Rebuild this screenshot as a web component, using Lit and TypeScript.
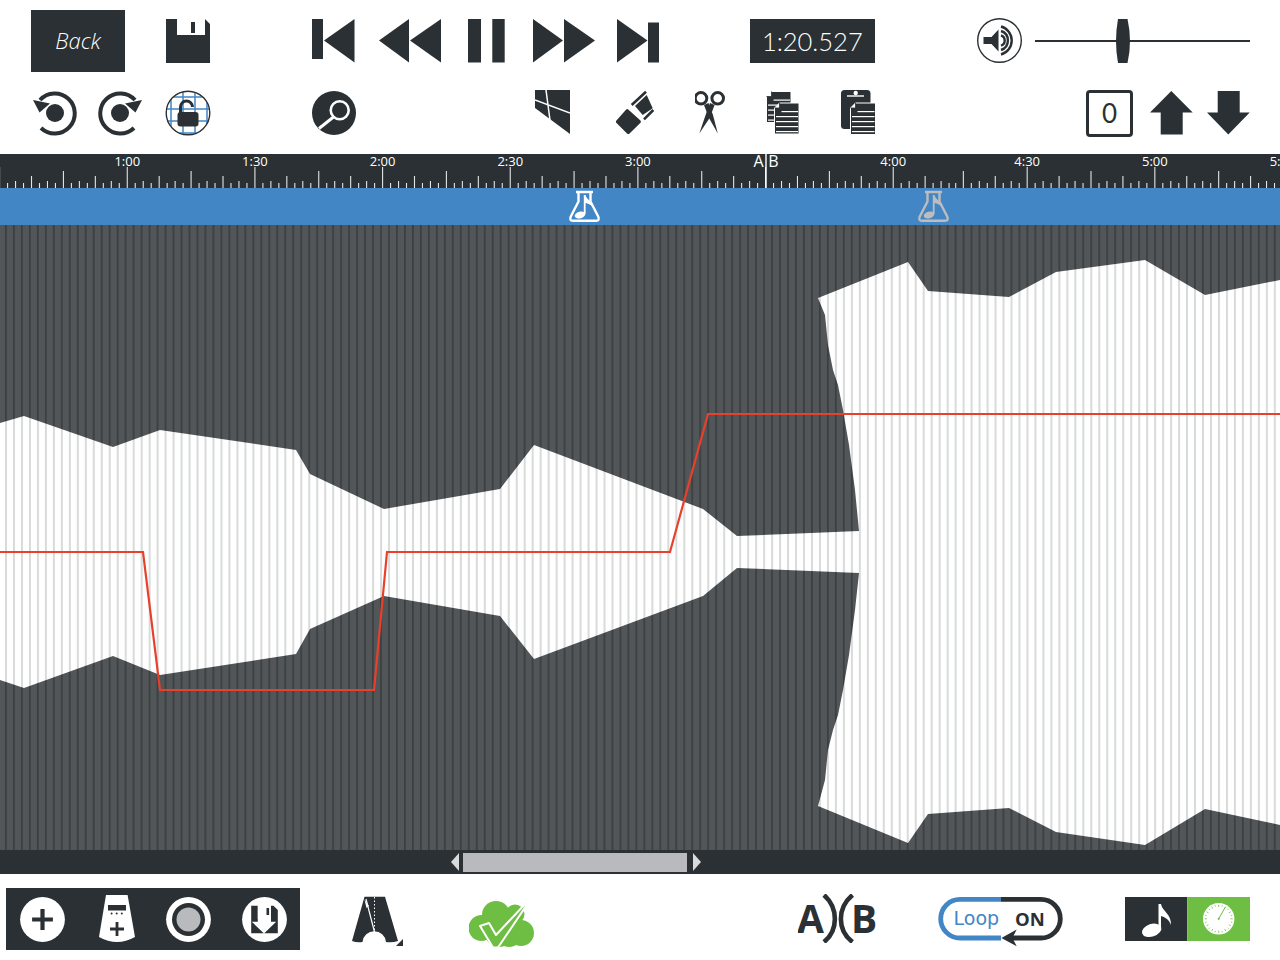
import { LitElement, html, css, svg } from "lit";
import { customElement } from "lit/decorators.js";

const INK = "#2a3033";
const BLUE = "#4286c6";
const GREEN = "#6fbe44";
const THUMB = "#b9babd";

// ruler scale: one 30s step in px, x of the 0:30 mark. The reference has an extra
// tick a little after 4:00, so everything from 4:15 on sits 6px further right.
const STEP = 127.66;
const ZERO = -0.4;
const JUMP_AT = 120;
const JUMP = 6.3;
const tickX = (i: number) => ZERO + (i * STEP) / 16 + (i >= JUMP_AT ? JUMP : 0);
const LABELS = ["1:00", "1:30", "2:00", "2:30", "3:00", "", "4:00", "4:30", "5:00", "5:30"];

const TOP_EDGE =
  "0,423 24,416 113,447 160,430 296,450 310,474 384,509 500,489 534,445 703,509 737,536 859,531 " +
  "855,490 849,445 843,410 838,385 833,370 828,345 825,315 818,298 908,262 928,291 1009,297 1056,272 1145,260 1205,295 1280,280";
const BOTTOM_EDGE =
  "1280,825 1205,809 1145,845 1056,832 1009,808 928,814 908,843 818,806 825,780 828,750 833,730 838,715 843,690 " +
  "849,655 855,610 859,573 737,568 703,596 534,659 500,616 384,596 310,629 296,654 160,675 113,656 24,688 0,680";
const RED_LINE = "0,552 143,552 160,690 374,690 387,552 670,552 708,414 1280,414";

const tick = (x: number, h: number) =>
  svg`<line x1=${x} x2=${x} y1=${34 - h} y2="34" stroke="#e4e5e5" stroke-width="1.1" />`;

const rulerTicks = () => {
  const out = [];
  for (let i = 0; i < 162; i++) {
    let h = 5;
    if (i % 16 === 0) h = 21;
    else if (i % 8 === 0) h = 17;
    else if (i % 4 === 0) h = 12;
    else if (i % 2 === 0) h = 7;
    out.push(tick(tickX(i), h));
  }
  out.push(tick(955.7, 5));
  return out;
};

const flask = (color: string, cls: string) => html`
  <svg class=${cls} width="33" height="33" viewBox="0 0 33 33">
    <path d="M8 2H25M10.5 2V11.5L2.8 26.5Q1 30.8 5 30.8H28Q32 30.8 30.2 26.5L22.5 11.5V2" fill="none" stroke=${color} stroke-width="2.4" stroke-linejoin="round" />
    <ellipse cx="12" cy="25" rx="5.4" ry="3.3" transform="rotate(-14 12 25)" fill=${color} />
    <path d="M15.8 24V5H17.6C18.5 10 25 11 25.5 18C23.5 14.5 20 13.5 17.6 13V24Z" fill=${color} />
  </svg>
`;

const page = (x: number, y: number, w: number, h: number) => svg`
  <path d="M${x + 5} ${y}H${x + w}V${y + h}H${x}V${y + 5}Z" fill=${INK} stroke="#fff" stroke-width="1" />
  <path d="M${x + 5} ${y}V${y + 5}H${x}" fill="#fff" stroke="${INK}" stroke-width=".8" />
  ${[9, 14, 19, 24, 29].map(
    (d) => svg`<rect x=${x + (d < 10 ? 7 : 1.5)} y=${y + d - 1} width=${w - (d < 10 ? 8 : 2.5)} height="1.2" fill="#fff" />`
  )}
`;

const clockTicks = () => {
  const out = [];
  for (let i = 0; i < 24; i++) {
    const a = (i * Math.PI) / 12;
    const r0 = i % 2 ? 12.6 : 11.8;
    out.push(svg`<line x1=${Math.sin(a) * r0} y1=${Math.cos(a) * r0} x2=${Math.sin(a) * 14} y2=${Math.cos(a) * 14} stroke=${GREEN} stroke-width=".8" />`);
  }
  return out;
};

@customElement("app-root")
export class AppRoot extends LitElement {
  static styles = css`
    :host {
      display: block;
      width: 1280px;
      height: 960px;
      overflow: hidden;
      background: #fff;
      font-family: "Lato", "Open Sans", sans-serif;
      color: #2a3033;
    }
    svg {
      display: block;
      flex: none;
      fill: #2a3033;
    }

    .toolbar {
      height: 154px;
      padding-top: 9.5px;
      box-sizing: border-box;
    }
    .row {
      display: flex;
      align-items: center;
    }
    .row1 {
      height: 62px;
      padding-left: 31px;
    }
    .row2 {
      height: 47px;
      margin-top: 18px;
      padding-left: 32px;
    }
    .back {
      width: 94px;
      height: 62px;
      box-sizing: border-box;
      padding-bottom: 2px;
      background: #2a3033;
      color: #fff;
      display: flex;
      align-items: center;
      justify-content: center;
      font-family: "Open Sans", sans-serif;
      font-style: italic;
      font-weight: 300;
      font-size: 22px;
    }
    .save { margin-left: 40.5px; }
    .skipback { margin-left: 102.8px; }
    .rewind { margin-left: 24.2px; }
    .pause { margin-left: 27px; }
    .forward { margin-left: 28.6px; }
    .skipnext { margin-left: 21.7px; }
    .timer {
      margin-left: 91px;
      width: 124.7px;
      height: 44px;
      background: #2a3033;
      color: #fff;
      display: flex;
      align-items: center;
      justify-content: center;
      font-weight: 300;
      font-size: 25.5px;
    }
    .speaker { margin-left: 102.8px; }
    .volume { margin-left: 12.5px; }
    .redo { margin-left: 19px; }
    .lock { margin-left: 21.5px; }
    .search { margin-left: 100.8px; }
    .split { margin-left: 177.7px; }
    .eraser { margin-left: 46px; }
    .scissors { margin-left: 40px; }
    .copy { margin-left: 41px; }
    .paste { margin-left: 41.7px; }
    .zero {
      margin-left: 210.3px;
      width: 47px;
      height: 47px;
      box-sizing: border-box;
      border: 3px solid #2a3033;
      border-radius: 4px;
      display: flex;
      align-items: center;
      justify-content: center;
      font-size: 26px;
    }
    .up { margin-left: 17px; }
    .down { margin-left: 13.7px; }

    .ruler {
      background: #2a3033;
      overflow: visible;
    }
    .ruler text {
      font-family: "Open Sans", sans-serif;
      font-size: 13px;
      fill: #fff;
      text-anchor: middle;
    }
    .ruler text.ab {
      font-size: 16px;
    }

    .markers {
      height: 37px;
      background: #4286c6;
      display: flex;
      align-items: center;
      padding-left: 568px;
    }
    .flask-b { margin-left: 316px; }

    .scrollbar {
      height: 24px;
      margin-bottom: 1px;
      background: #2a3033;
      display: flex;
      align-items: center;
      padding-left: 451px;
    }
    .arrow-l,
    .arrow-r {
      width: 0;
      height: 0;
      border-top: 9.5px solid transparent;
      border-bottom: 9.5px solid transparent;
    }
    .arrow-l { border-right: 8.5px solid #d9dadb; }
    .arrow-r { border-left: 8.5px solid #d9dadb; margin-left: 6px; }
    .thumb {
      width: 224px;
      height: 19px;
      margin-left: 4px;
      background: #b9babd;
    }

    .footer {
      height: 85px;
      box-sizing: border-box;
      padding: 13px 0 0 6px;
      display: flex;
      align-items: flex-start;
    }
    .panel {
      width: 294px;
      height: 62px;
      box-sizing: border-box;
      padding-left: 14px;
      background: #2a3033;
      display: flex;
      align-items: center;
    }
    .add-meter { margin-left: 33.6px; }
    .record { margin-left: 31.4px; }
    .import { margin-left: 31.4px; }
    .metronome { margin: 8px 0 0 52px; }
    .cloud { margin: 7px 0 0 65px; }
    .ab-btn { margin: 6px 0 0 262.5px; }
    .loop { margin: 8.5px 0 0 61.5px; }
    .mode { margin: 8.7px 0 0 61px; }

    .ab-btn text {
      font-family: "Open Sans", sans-serif;
      font-weight: 700;
      font-size: 39px;
    }
    .loop .word {
      font-family: "DejaVu Sans", sans-serif;
      font-size: 19px;
      fill: #4286c6;
    }
    .loop .state {
      font-family: "Open Sans", sans-serif;
      font-size: 18.5px;
      font-weight: 700;
    }
  `;

  render() {
    return html`
      <div class="toolbar">
        <div class="row row1">
          <div class="back">Back</div>
          <svg class="save" width="44" height="44" viewBox="0 0 44 44">
            <path d="M0 0H11V16H39V0L44 5V44H0Z" />
            <rect x="25" y="3" width="4" height="11" />
          </svg>
          <svg class="skipback" width="42.5" height="44" viewBox="0 0 42.5 44">
            <rect y="0" width="11" height="40" />
            <path d="M12 21.5L42.5 0V43.5Z" />
          </svg>
          <svg class="rewind" width="62" height="44" viewBox="0 0 62 44">
            <path d="M0 21.5L30 0V43.5Z" /><path d="M31 21.5L62 0V43.5Z" />
          </svg>
          <svg class="pause" width="36.7" height="44" viewBox="0 0 36.7 44">
            <rect width="13" height="43.5" /><rect x="24.3" width="12.4" height="43.5" />
          </svg>
          <svg class="forward" width="62" height="44" viewBox="0 0 62 44">
            <path d="M0 0L30 21.5L0 43.5Z" /><path d="M31 0L62 21.5L31 43.5Z" />
          </svg>
          <svg class="skipnext" width="42" height="44" viewBox="0 0 42 44">
            <path d="M0 0L30.5 21.5L0 43.5Z" />
            <rect x="31" y="3.5" width="11" height="40" />
          </svg>
          <div class="timer">1:20.527</div>
          <svg class="speaker" width="45" height="45" viewBox="-22.5 -22.5 45 45">
            <circle r="21.8" fill="#fff" stroke="#2a3033" stroke-width="1.4" />
            <path d="M-16 -3.6H-8L-1 -11V11L-8 3.6H-16Z" />
            <g fill="none" stroke="#2a3033" stroke-width="2.4">
              <path d="M1.5 -5.2A5.5 5.5 0 0 1 1.5 5.2" />
              <path d="M1.5 -9.5A10 10 0 0 1 1.5 9.5" />
              <path d="M1.5 -14A14.5 14.5 0 0 1 1.5 14" />
            </g>
          </svg>
          <svg class="volume" width="215" height="44" viewBox="0 0 215 44">
            <rect y="21" width="215" height="2" />
            <path d="M83 0H92.5Q95 11 95 22T92.5 44H83Q81 33 81 22T83 0Z" />
          </svg>
        </div>

        <div class="row row2">
          <svg class="undo" width="46" height="46" viewBox="-23 -23 46 46">
            <g>
              <path d="M-15 -13A20 20 0 1 1 -14 15" fill="none" stroke="#2a3033" stroke-width="4" />
              <path d="M-22 -13L-5 -9.5L-15.5 -.5Z" />
              <circle r="9" />
            </g>
          </svg>
          <svg class="redo" width="46" height="46" viewBox="-23 -23 46 46">
            <g transform="scale(-1 1)">
              <path d="M-15 -13A20 20 0 1 1 -14 15" fill="none" stroke="#2a3033" stroke-width="4" />
              <path d="M-22 -13L-5 -9.5L-15.5 -.5Z" />
              <circle r="9" />
            </g>
          </svg>
          <svg class="lock" width="46" height="46" viewBox="-23 -23 46 46">
            <defs><clipPath id="lock-clip"><circle r="21.5" /></clipPath></defs>
            <circle r="21.8" fill="#fff" />
            <g clip-path="url(#lock-clip)" stroke="#4286c6" stroke-width="1.5" fill="none">
              <path d="M-17 -23V23M-5 -23V23M7 -23V23M19 -23V23M-23 -16H23M-23 -4H23M-23 8H23M-23 20H23" />
            </g>
            <circle r="21.8" fill="none" stroke="#2a3033" stroke-width="1.4" />
            <path d="M-7.5 0V-6A6 6 0 0 1 4.5 -6" fill="none" stroke="#2a3033" stroke-width="3" />
            <rect x="-10.5" y="-1" width="21" height="14.5" rx="3" />
          </svg>
          <svg class="search" width="46" height="46" viewBox="-23 -23 46 46">
            <circle r="22" />
            <circle cx="5.7" cy="-2.7" r="9" fill="none" stroke="#fff" stroke-width="2.6" />
            <path d="M-.5 4L-15 15.5" stroke="#fff" stroke-width="3" />
          </svg>
          <svg class="split" width="35" height="46" viewBox="0 0 35 46">
            <path d="M0 0H35V44L0 18Z" />
            <path d="M0 10L35 23M11 0L15.5 34" stroke="#fff" stroke-width="1.5" />
          </svg>
          <svg class="eraser" width="39" height="46" viewBox="0 0 39 46">
            <path d="M1.8 31.7L11.3 21L23 31.7L12.3 42.2Z" stroke="#2a3033" stroke-width="3.6" stroke-linejoin="round" />
            <path d="M19 16L30.7 5L36.7 18.3L26.7 25Z" />
            <path d="M15.7 15L30 1.7M28 29.3L37.3 20" stroke="#2a3033" stroke-width="2.6" />
          </svg>
          <svg class="scissors" width="30" height="46" viewBox="0 0 30 46">
            <circle cx="6" cy="8.3" r="5.8" fill="none" stroke="#2a3033" stroke-width="3" />
            <circle cx="22.7" cy="8.3" r="5.8" fill="none" stroke="#2a3033" stroke-width="3" />
            <path d="M9 15L13.5 13L18 25L22.8 43.5L14 28Z" />
            <path d="M19.6 15L15 13L10.6 25L4.3 43.5L14.6 28Z" />
          </svg>
          <svg class="copy" width="33" height="46" viewBox="0 0 33 46">
            ${page(0.5, 1.5, 24.5, 31)} ${page(8.5, 13, 24.5, 31)}
          </svg>
          <svg class="paste" width="35" height="46" viewBox="0 0 35 46">
            <rect x="0" y="0" width="29.5" height="39" rx="3.5" />
            <path d="M6 6H23" stroke="#fff" stroke-width="1.4" />
            <circle cx="14.7" cy="3" r="2.2" fill="#fff" />
            ${page(9.5, 13, 25, 31.5)}
          </svg>
          <div class="zero">0</div>
          <svg class="up" width="43" height="46" viewBox="0 0 43 46">
            <path d="M21.3 1L42.7 22.5H32.7V44.5H10.7V22.5H0Z" />
          </svg>
          <svg class="down" width="43" height="46" viewBox="0 0 43 46">
            <path d="M10.7 1H32.7V22.5H42.7L21.3 44.5L0 22.5H10.7Z" />
          </svg>
        </div>
      </div>

      <svg class="ruler" width="1280" height="34" viewBox="0 0 1280 34">
        ${rulerTicks()}
        ${LABELS.map((t, i) =>
          t ? svg`<text x=${tickX((i + 1) * 16)} y="11.5">${t}</text>` : ""
        )}
        <line x1="766" x2="766" y1="0" y2="34" stroke="#fff" stroke-width="1.4" />
        <text class="ab" x="758.5" y="13">A</text>
        <text class="ab" x="773.5" y="13">B</text>
      </svg>

      <div class="markers">
        ${flask("#fff", "flask-a")} ${flask("#bdbdbd", "flask-b")}
      </div>

      <svg width="1280" height="625" viewBox="0 225 1280 625">
        <defs>
          <pattern id="dark" width="7.98" height="10" patternUnits="userSpaceOnUse" x="5">
            <rect width="7.98" height="10" fill="#525659" />
            <rect width="1.8" height="10" fill="#3a3f41" />
          </pattern>
          <pattern id="light" width="7.98" height="10" patternUnits="userSpaceOnUse" x="5">
            <rect width="7.98" height="10" fill="#fff" />
            <rect width="2" height="10" fill="#d9dada" />
          </pattern>
        </defs>
        <rect y="225" width="1280" height="625" fill="url(#dark)" />
        <polygon points="${TOP_EDGE} ${BOTTOM_EDGE}" fill="url(#light)" />
        <polyline points=${RED_LINE} fill="none" stroke="#e8402a" stroke-width="2.2" />
      </svg>

      <div class="scrollbar">
        <div class="arrow-l"></div>
        <div class="thumb"></div>
        <div class="arrow-r"></div>
      </div>

      <div class="footer">
        <div class="panel">
          <svg class="add" width="45" height="45" viewBox="-22.5 -22.5 45 45">
            <circle r="22.4" fill="#fff" />
            <path d="M-10.4 0H10.4M0 -10.4V10.4" stroke="#2a3033" stroke-width="4.2" />
          </svg>
          <svg class="add-meter" width="36" height="49" viewBox="0 0 36 49">
            <path d="M7 0H28.6L36 42Q18 52 0 42Z" fill="#fff" />
            <rect x="9" y="10" width="18" height="5.5" />
            <circle cx="12.6" cy="18.6" r="1" /><circle cx="17.7" cy="18.6" r="1" /><circle cx="22.8" cy="18.6" r="1" />
            <path d="M11 34H25M18 27V41" stroke="#2a3033" stroke-width="2.8" />
          </svg>
          <svg class="record" width="45" height="45" viewBox="-22.5 -22.5 45 45">
            <circle r="22.4" fill="#fff" />
            <circle r="16.5" />
            <circle r="12" fill=${THUMB} />
          </svg>
          <svg class="import" width="45" height="45" viewBox="-22.5 -22.5 45 45">
            <circle r="22.4" fill="#fff" />
            <path d="M-13.3 -13.7H-6.7V2.3H-12.7L-.5 14L11.7 2.3H6.5V-13.7H9L13.3 -9.5V13.7H-13.3Z" />
            <path d="M-6.7 -13.7H-1V-.5H-6.7Z" fill="#fff" />
            <rect x="2" y="-11.5" width="2.6" height="7" />
          </svg>
        </div>

        <svg class="metronome" width="52" height="50" viewBox="0 0 52 50">
          <path d="M12.5 .7H33L46 45Q40 47 34 46A11.8 11.8 0 0 0 10.5 46Q5 47 0 45Z" />
          <path d="M14 3L23.5 40" stroke="#fff" stroke-width="1.2" />
          <path d="M12.5 3.5L17 10L14.5 12Z" fill="#fff" />
          <path d="M22.5 1V36" stroke="#fff" stroke-width="1" stroke-dasharray="1.5 2" />
          <path d="M51 43V50H44Z" />
        </svg>

        <svg class="cloud" width="66" height="54" viewBox="0 0 66 54">
          <g fill=${GREEN}>
            <circle cx="27" cy="20" r="14" />
            <circle cx="46" cy="19" r="9.5" />
            <circle cx="12.5" cy="33" r="13" />
            <circle cx="52" cy="38" r="13" />
            <circle cx="30" cy="38" r="14" />
            <circle cx="40" cy="39" r="13" />
          </g>
          <path d="M11 31L20 28L27 40L64.5 0L29 52.5H24Z" fill=${GREEN} stroke="#fff" stroke-width="2" stroke-linejoin="round" />
        </svg>

        <svg class="ab-btn" width="79" height="49" viewBox="0 0 79 49">
          <text x="-1" y="38.5">A</text>
          <path d="M26 1C40.5 14 40.5 36 26 48" fill="none" stroke="#2a3033" stroke-width="4.6" />
          <path d="M54.5 1C39 14 39 36 54.5 48" fill="none" stroke="#2a3033" stroke-width="4.6" />
          <text x="53" y="38.5">B</text>
        </svg>

        <svg class="loop" width="126" height="50" viewBox="0 0 126 50">
          <path d="M63 2.4H22A19.3 19.3 0 0 0 22 41H63" fill="none" stroke=${BLUE} stroke-width="4.8" />
          <path d="M63 2.4H103A19.3 19.3 0 0 1 103 41H72" fill="none" stroke=${INK} stroke-width="4.8" />
          <path d="M63.4 41L78.7 32.6L74.4 41L78.7 49.3Z" />
          <text class="word" x="15.5" y="27.5">Loop</text>
          <text class="state" x="77" y="29">ON</text>
        </svg>

        <svg class="mode" width="125" height="44" viewBox="0 0 125 44">
          <rect width="62.3" height="44" />
          <rect x="62.3" width="62.7" height="44" fill=${GREEN} />
          <ellipse cx="26.7" cy="33.3" rx="10" ry="6.3" transform="rotate(-18 26.7 33.3)" fill="#fff" />
          <path d="M33.5 33V7H36C37 14 46.5 17 46 28C44 22 39.5 20 36 19V33Z" fill="#fff" />
          <g transform="translate(93.7 21.8)">
            <circle r="15.7" fill="#fff" />
            ${clockTicks()}
            <path d="M0 0L6.5 -11.5" stroke=${GREEN} stroke-width="1" />
            <circle r="1.1" fill=${GREEN} />
          </g>
        </svg>
      </div>
    `;
  }
}
